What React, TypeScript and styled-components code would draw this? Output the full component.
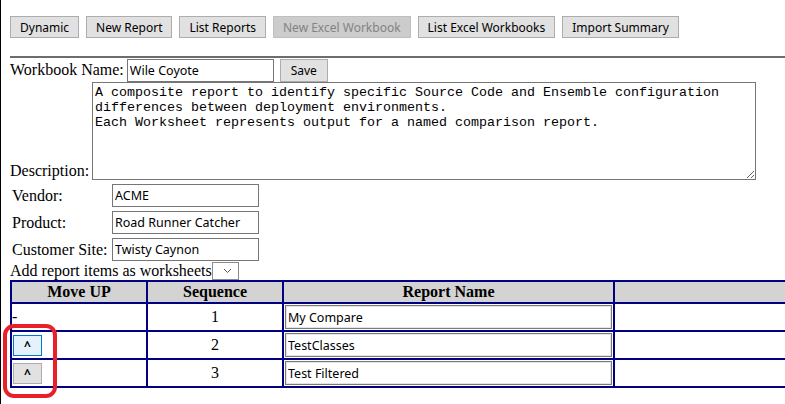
import React from "react";
import styled, { createGlobalStyle } from "styled-components";

const GlobalStyle = createGlobalStyle`
  html, body {
    margin: 0;
    padding: 0;
    background: #ffffff;
    overflow: hidden;
  }
  body {
    font-family: "Liberation Serif", "Times New Roman", serif;
    font-size: 16px;
    color: #000000;
  }
`;

const uiFont = `"Noto Sans", Tahoma, sans-serif`;

interface ReportItem {
  sequence: number;
  name: string;
  canMove: boolean;
  focused?: boolean;
}

const navItems = [
  { label: "Dynamic" },
  { label: "New Report" },
  { label: "List Reports" },
  { label: "New Excel Workbook", disabled: true },
  { label: "List Excel Workbooks" },
  { label: "Import Summary" },
];

const reportItems: ReportItem[] = [
  { sequence: 1, name: "My Compare", canMove: false },
  { sequence: 2, name: "TestClasses", canMove: true, focused: true },
  { sequence: 3, name: "Test Filtered", canMove: true },
];

const descriptionText =
  "A composite report to identify specific Source Code and Ensemble configuration\ndifferences between deployment environments.\nEach Worksheet represents output for a named comparison report.";

function App() {
  return (
    <Page>
      <GlobalStyle />
      <NavBar>
        {navItems.map((item) => (
          <NavButton key={item.label} disabled={item.disabled}>
            {item.label}
          </NavButton>
        ))}
      </NavBar>
      <Rule />

      <NameRow>
        <span>Workbook Name:</span>
        <TextBox $width={147} defaultValue="Wile Coyote" />
        <SaveButton>Save</SaveButton>
      </NameRow>

      <DescriptionRow>
        <span>Description:</span>
        <Description defaultValue={descriptionText} spellCheck={false} />
      </DescriptionRow>

      <DetailsGrid>
        <DetailLabel>Vendor:</DetailLabel>
        <TextBox $width={147} defaultValue="ACME" />
        <DetailLabel>Product:</DetailLabel>
        <TextBox $width={147} defaultValue="Road Runner Catcher" />
        <DetailLabel>Customer Site:</DetailLabel>
        <TextBox $width={147} defaultValue="Twisty Caynon" />
      </DetailsGrid>

      <AddRow>
        <span>Add report items as worksheets</span>
        <SelectBox>
          <svg width="9" height="6" viewBox="0 0 9 6">
            <path d="M1 1 L4.5 4.5 L8 1" fill="none" stroke="#555" strokeWidth="1" />
          </svg>
        </SelectBox>
      </AddRow>

      <TableWrap>
        <ReportTable>
          <colgroup>
            <col style={{ width: 136 }} />
            <col style={{ width: 136 }} />
            <col style={{ width: 331 }} />
            <col style={{ width: 250 }} />
          </colgroup>
          <thead>
            <tr>
              <HeadCell>Move UP</HeadCell>
              <HeadCell>Sequence</HeadCell>
              <HeadCell>Report Name</HeadCell>
              <HeadCell />
            </tr>
          </thead>
          <tbody>
            {reportItems.map((item) => (
              <tr key={item.sequence}>
                <Cell $align="left">
                  {item.canMove ? (
                    <MoveButton $focused={item.focused}>^</MoveButton>
                  ) : (
                    "-"
                  )}
                </Cell>
                <Cell $align="center">{item.sequence}</Cell>
                <Cell $align="left">
                  <NameInput defaultValue={item.name} />
                </Cell>
                <Cell />
              </tr>
            ))}
          </tbody>
        </ReportTable>
        <Highlight />
      </TableWrap>
    </Page>
  );
}

const Page = styled.div`
  width: 900px;
  min-height: 404px;
  box-sizing: border-box;
  border-left: 1px solid #000000;
  padding: 16px 0 0 9px;
`;

const NavBar = styled.div`
  display: flex;
  gap: 7px;
`;

const NavButton = styled.button`
  height: 22px;
  padding: 0 9px;
  border: 1px solid #adadad;
  background: #e1e1e1;
  font-family: ${uiFont};
  font-size: 12px;
  color: #000000;

  &:disabled {
    background: #cccccc;
    border-color: #bfbfbf;
    color: #838383;
  }
`;

const Rule = styled.div`
  margin-top: 18px;
  border-top: 2px solid #6d6d6d;
`;

const NameRow = styled.div`
  display: flex;
  align-items: center;
  height: 24px;

  span {
    margin-right: 3px;
  }
`;

const TextBox = styled.input<{ $width: number }>`
  box-sizing: border-box;
  width: ${(p) => p.$width}px;
  height: 23px;
  padding: 0 2px;
  border: 1px solid #767676;
  font-family: ${uiFont};
  font-size: 12.5px;
  color: #000000;
`;

const SaveButton = styled.button`
  margin-left: 6px;
  width: 48px;
  height: 23px;
  border: 1px solid #adadad;
  background: #e1e1e1;
  font-family: ${uiFont};
  font-size: 12px;
`;

const DescriptionRow = styled.div`
  display: flex;
  align-items: flex-end;

  span {
    margin-right: 3px;
    line-height: 18px;
  }
`;

const Description = styled.textarea`
  box-sizing: border-box;
  width: 664px;
  height: 98px;
  padding: 2px 2px;
  border: 1px solid #767676;
  font-family: "Liberation Mono", "Courier New", monospace;
  font-size: 13.33px;
  line-height: 15px;
  color: #000000;
  resize: both;
`;

const DetailsGrid = styled.div`
  display: grid;
  grid-template-columns: 97px 147px;
  column-gap: 3px;
  row-gap: 4px;
  padding: 4px 2px 1px;
`;

const DetailLabel = styled.span`
  display: flex;
  align-items: center;
`;

const AddRow = styled.div`
  display: flex;
  align-items: center;
  height: 18px;
`;

const SelectBox = styled.div`
  box-sizing: border-box;
  display: flex;
  align-items: center;
  justify-content: flex-end;
  width: 27px;
  height: 18px;
  padding-right: 6px;
  border: 1px solid #8a8a8a;
  background: #ffffff;
`;

const TableWrap = styled.div`
  position: relative;
`;

const ReportTable = styled.table`
  table-layout: fixed;
  border-collapse: collapse;
  width: 853px;
  font-family: "Liberation Serif", "Times New Roman", serif;
  font-size: 16px;
`;

const HeadCell = styled.th`
  height: 20px;
  padding: 0 1px;
  border: 2px solid #000080;
  background: #d3d3d3;
  font-weight: bold;
  text-align: center;
`;

const Cell = styled.td<{ $align?: "left" | "center" }>`
  height: 26px;
  padding: 0;
  border: 2px solid #000080;
  text-align: ${(p) => p.$align ?? "left"};
  vertical-align: middle;
`;

const MoveButton = styled.button<{ $focused?: boolean }>`
  display: block;
  width: 29px;
  height: 21px;
  margin-left: 1px;
  padding: 0;
  border: 1px solid ${(p) => (p.$focused ? "#0078d7" : "#adadad")};
  background: ${(p) => (p.$focused ? "#e5f1fb" : "#e1e1e1")};
  font-family: ${uiFont};
  font-size: 12px;
  font-weight: bold;
  color: #000000;
`;

const NameInput = styled.input`
  box-sizing: border-box;
  display: block;
  width: 327px;
  height: 24px;
  margin-left: 1px;
  padding: 0 2px;
  border: 1px solid #7a7a7a;
  box-shadow: inset 0 0 0 1px #e4e4e4;
  font-family: ${uiFont};
  font-size: 12.5px;
  color: #000000;
`;

const Highlight = styled.div`
  position: absolute;
  left: -7px;
  top: 44px;
  width: 54px;
  height: 74px;
  box-sizing: border-box;
  border: 4px solid #e8202a;
  border-radius: 11px;
  pointer-events: none;
`;

export default App;
